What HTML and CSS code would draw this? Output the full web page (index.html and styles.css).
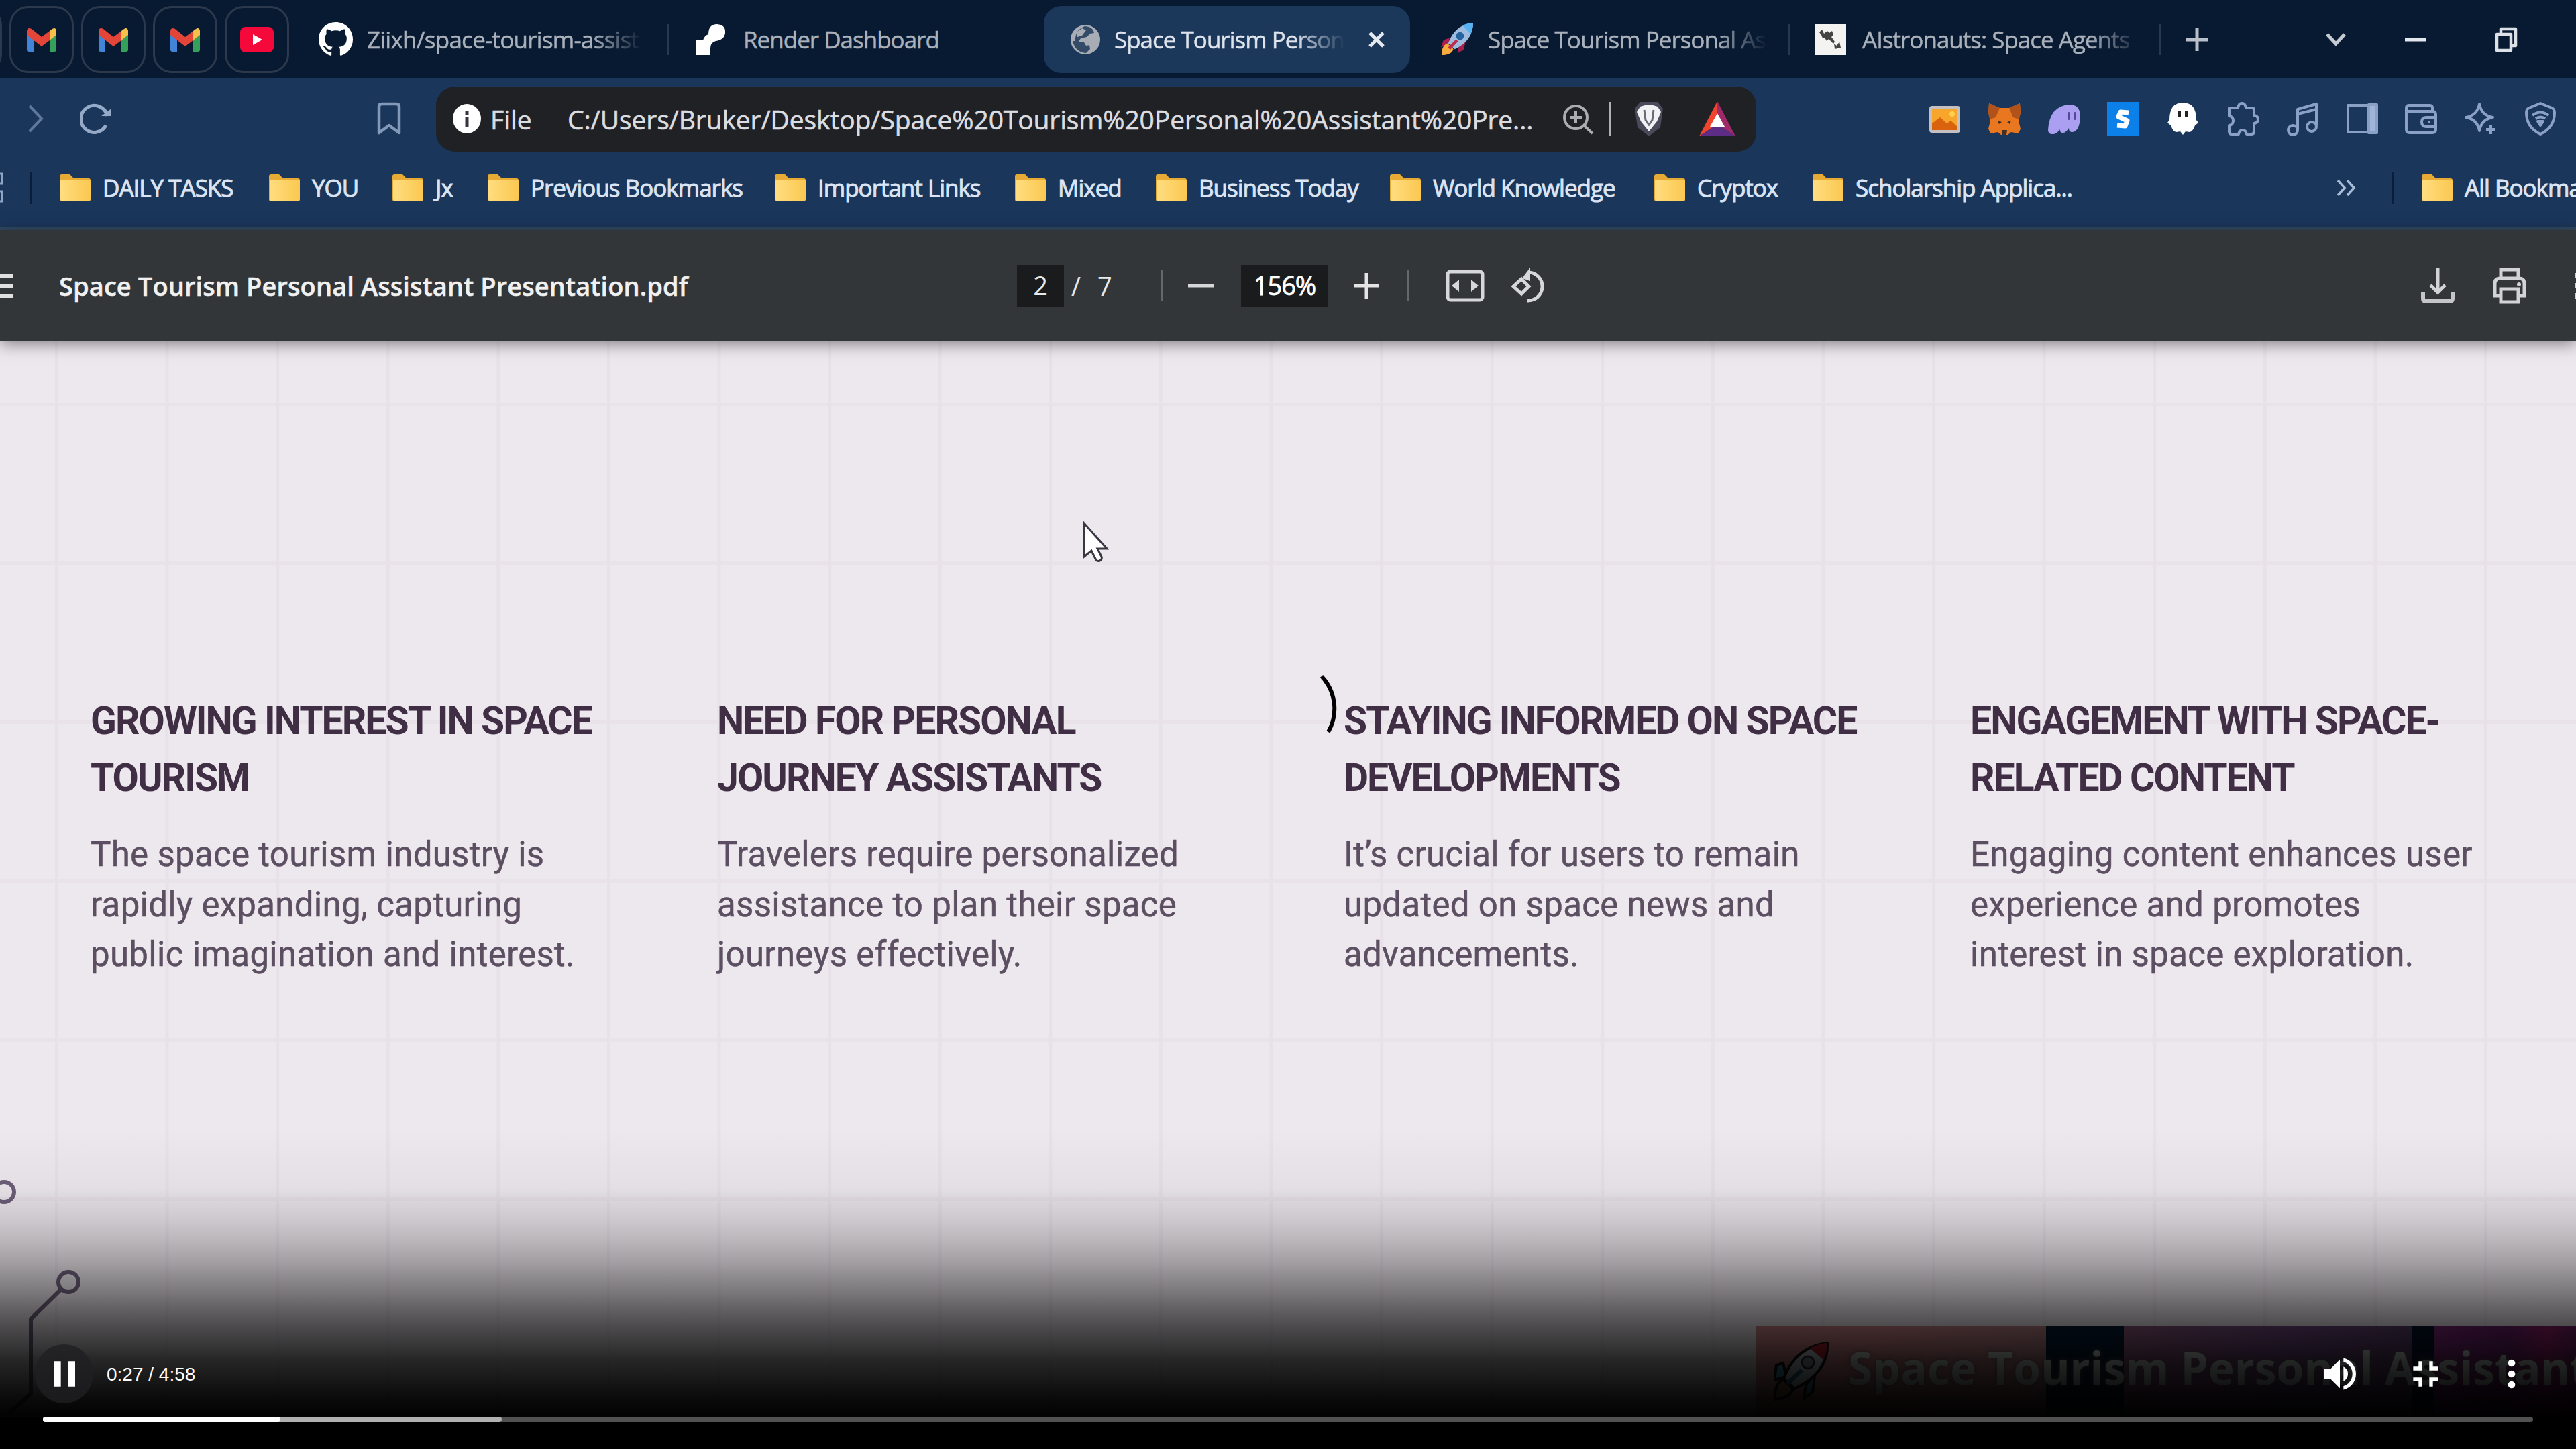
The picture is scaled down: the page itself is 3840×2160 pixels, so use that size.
FILE: index.html
```html
<!DOCTYPE html>
<html lang="en">
<head>
<meta charset="utf-8">
<title>Space Tourism Personal Assistant Presentation</title>
<link rel="stylesheet" href="styles.css">
</head>
<body>
<svg class="defs" aria-hidden="true">
  <defs>
    <linearGradient id="folder-fill" x1="0" x2="1"><stop offset="0" stop-color="#ffdd80"/><stop offset="1" stop-color="#fbc850"/></linearGradient>
    <symbol id="gmail" viewBox="0 0 44 36">
      <path d="M0 7v26q0 3 3 3h7V14z" fill="#4285d8"/><path d="M44 7v26q0 3-3 3h-7V14z" fill="#34a05a"/>
      <path d="M34 5l4-3q5-3 6 3v6l-10 8z" fill="#f7c04a"/><path d="M0 5q1-6 7-3l15 12L34 5v14L22 28 0 11z" fill="#e34538"/>
    </symbol>
    <symbol id="folder" viewBox="0 0 46 40"><path d="M0 3q0-3 3-3h12l6 6h22q3 0 3 3v28q0 3-3 3H3q-3 0-3-3z" fill="#e6aa35"/><path d="M1 10q0-2 2-2h40q3 0 3 3v25q0 3-3 3H3q-2 0-2-3z" fill="url(#folder-fill)"/></symbol>
  </defs>
</svg>

<main class="player">
  <section class="browser">
    <div class="tabstrip">
      <div class="pins">
        <span class="pin"></span>
        <span class="pin"><svg class="gmail"><use href="#gmail"/></svg></span>
        <span class="pin"><svg class="gmail"><use href="#gmail"/></svg></span>
        <span class="pin"><svg class="gmail"><use href="#gmail"/></svg></span>
        <span class="pin"><svg class="youtube" viewBox="0 0 50 38"><rect width="50" height="38" rx="8" fill="#f5093a"/><path d="M19 11l14 8-14 8z" fill="#fff"/></svg></span>
      </div>
      <div class="tab tab-github">
        <svg class="icon51" viewBox="0 0 16 16"><path fill="#fff" d="M8 0C3.58 0 0 3.58 0 8c0 3.54 2.29 6.53 5.47 7.59.4.07.55-.17.55-.38 0-.19-.01-.82-.01-1.49-2.01.37-2.53-.49-2.69-.94-.09-.23-.48-.94-.82-1.13-.28-.15-.68-.52-.01-.53.63-.01 1.08.58 1.23.82.72 1.21 1.87.87 2.33.66.07-.52.28-.87.51-1.07-1.78-.2-3.64-.89-3.64-3.95 0-.87.31-1.59.82-2.15-.08-.2-.36-1.02.08-2.12 0 0 .67-.21 2.2.82.64-.18 1.32-.27 2-.27s1.36.09 2 .27c1.53-1.04 2.2-.82 2.2-.82.44 1.1.16 1.92.08 2.12.51.56.82 1.27.82 2.15 0 3.07-1.87 3.75-3.65 3.95.29.25.54.73.54 1.48 0 1.07-.01 1.93-.01 2.2 0 .21.15.46.55.38A8.01 8.01 0 0 0 16 8c0-4.42-3.58-8-8-8z"/></svg>
        <span class="tab-title fade">Ziixh/space-tourism-assist</span>
      </div>
      <div class="tab tab-render">
        <svg class="icon46" viewBox="0 0 46 46"><path d="M0 46V24h11q2-7 8-9 0-15 13-15 13 1 12 13-1 10-14 12-8 2-8 11v10z" fill="#fff"/></svg>
        <span class="tab-title">Render Dashboard</span>
      </div>
      <div class="tab tab-active">
        <svg class="icon46" viewBox="0 0 46 46"><circle cx="23" cy="23" r="22" fill="#a8adb5"/><path d="M22 3q12 0 14 10l-6 1-5 5-9 2-3 5 8 1 3 5 5-1 1 6-6 6q-16-1-20-18l4 0Q7 9 22 3z" fill="#1e3959" opacity=".85"/><path d="M10 12l8-6 6 3-6 8-7 2zM28 22l12-4 3 6-7 10-9-3z" fill="#a8adb5"/></svg>
        <span class="tab-title fade">Space Tourism Person</span>
        <svg class="close" viewBox="0 0 26 26"><path d="M3 3l20 20M23 3L3 23" stroke="#e6ebf2" stroke-width="5"/></svg>
      </div>
      <div class="tab tab-rocket">
        <svg class="icon51" viewBox="0 0 52 52"><path d="M14 24l-9 3-4 11 12-4zM28 38l-2 9 10-5 2-12z" fill="#a81e4c"/><path d="M2 50q0-15 9-18l9 9q-3 9-18 9z" fill="#f8ab3c"/><path d="M12 32Q22 4 50 1q0 27-28 40z" fill="#9dbce0"/><path d="M34 5Q42 1 50 1q0 9-4 17z" fill="#56b3f2"/><circle cx="30" cy="21" r="6" fill="#27639e"/><path d="M12 38l12-12 3 3-12 13z" fill="#c22a4a"/></svg>
        <span class="tab-title fade">Space Tourism Personal As</span>
      </div>
      <div class="tab tab-ai">
        <svg class="icon46" viewBox="0 0 46 46"><path d="M0 0h46v46H0z" fill="#f3f3f1"/><path d="M6 12l4-4 3 6 5-4 3 3 4-3 2 6-3 3 5 7-2 3-7-7-3 3-3-5-3 1-2-5z" fill="#444"/><path d="M28 29l4 3 4-6 2 9-9 2z" fill="#444"/></svg>
        <span class="tab-title fade">AIstronauts: Space Agents</span>
      </div>
      <svg class="plus" viewBox="0 0 34 34"><path d="M17 0v34M0 17h34" stroke="#b9c0ca" stroke-width="5"/></svg>
      <svg class="win-chevron" viewBox="0 0 30 20"><path d="M2 2l13 14L28 2" fill="none" stroke="#c5cad3" stroke-width="5"/></svg>
      <svg class="win-min" viewBox="0 0 32 6"><path d="M0 3h32" stroke="#e4e8ee" stroke-width="5"/></svg>
      <svg class="win-max" viewBox="0 0 34 38"><path d="M3 11h21v24H3zM9 11V3h22v25h-6" fill="none" stroke="#dde1e7" stroke-width="4.5" stroke-linejoin="round"/></svg>
    </div>

    <div class="toolbar">
      <svg class="fwd" viewBox="0 0 24 42"><path d="M2 2l18 19L2 40" fill="none" stroke="#5d7898" stroke-width="4"/></svg>
      <svg class="reload" viewBox="0 0 48 48"><path d="M39 34A20 20 0 1 1 41 20" fill="none" stroke="#95aac8" stroke-width="5"/><path d="M32 20h15V9z" fill="#95aac8"/></svg>
      <svg class="mark" viewBox="0 0 36 50"><path d="M3 46V7q0-4 4-4h22q4 0 4 4v39L18 35z" fill="none" stroke="#8299ba" stroke-width="4.5" stroke-linejoin="round"/></svg>
      <div class="address">
        <svg class="info" viewBox="0 0 42 44"><ellipse cx="21" cy="22" rx="21" ry="22" fill="#fff"/><path d="M18.500 10h5v6h-5zM18.500 19h5v15h-5z" fill="#33363b"/></svg>
        <span class="scheme">File</span>
        <span class="url">C:/Users/Bruker/Desktop/Space%20Tourism%20Personal%20Assistant%20Pre...</span>
        <svg class="magnify" viewBox="0 0 47 47"><circle cx="20" cy="21" r="17" fill="none" stroke="#a9acb0" stroke-width="4"/><path d="M32 33l13 12M20 12v18M11 21h18" stroke="#a9acb0" stroke-width="4"/></svg>
        <span class="address-rule"></span>
        <svg class="lion" viewBox="0 0 46 54"><path d="M10 2h26l8 10-4 28-17 13L6 40 2 12z" fill="#4b4a5b"/><path d="M10 9l7-2h12l7 2 5 8-6 14-12 15-12-15-6-14z" fill="#f2f2f5"/><path d="M16 14l2 15 5 7 5-7 2-15" fill="none" stroke="#6b6b78" stroke-width="3"/></svg>
        <svg class="bat" viewBox="0 0 54 52"><path d="M27 0L0 52l27-17z" fill="#f0452c"/><path d="M27 0l27 52-27-17z" fill="#9e2a68"/><path d="M0 52h54L27 34z" fill="#5d2c84"/><path d="M27 18L16 38h22z" fill="#fff"/></svg>
      </div>
      <div class="extensions">
        <svg viewBox="0 0 48 50"><rect x="1" y="6" width="46" height="40" rx="4" fill="#c4bfc0"/><path d="M5 10h38v32H5z" fill="#f8a52c"/><path d="M5 42V32l12-9 10 9 6-4 10 9v5z" fill="#d9620f"/><circle cx="35" cy="18" r="4" fill="#ffcf4f"/></svg>
        <svg viewBox="0 0 48 50"><path d="M1 2l16 7h14l16-7 1 14-3 12 3 12-3 7-11-2-5 4H19l-5-4-11 2-3-7 3-12-3-12z" fill="#e8771f"/><path d="M1 2l16 7-6 14-9 3-2-10zM47 2L31 9l6 14 9 3 2-10z" fill="#b0521a"/><path d="M14 28l6 2-4 3zM34 28l-6 2 4 3zM20 42h8l-1 7h-6z" fill="#40302b"/></svg>
        <svg viewBox="0 0 48 50"><path d="M0 42Q2 6 32 4q16 0 16 18-1 22-12 23-5 0-5-6-5 8-10 7-4-1-3-5-6 8-13 7-5-1-5-6z" fill="#ab9ff2"/><path d="M31 17v8M40 17v8" stroke="#55479c" stroke-width="4" stroke-linecap="round"/></svg>
        <svg viewBox="0 0 48 50"><path d="M0 0h48v50H0z" fill="#0a80e8"/><path d="M32 16l-12-1-3 7 13 6-3 8-12-1" fill="none" stroke="#fff" stroke-width="7" stroke-linejoin="round"/></svg>
        <svg viewBox="0 0 48 50"><path d="M4 27Q4 1 24 1t20 26l3 4-5 4q-3 9-8 10l-6-1-4 5-4-5-6 1q-5-1-8-10l-5-4z" fill="#fff"/><path d="M19 13v10M29 13v10" stroke="#222" stroke-width="4"/></svg>
        <svg viewBox="0 0 48 50" class="line"><path d="M4 9h13q1-7 6-7t6 7h9q3 0 3 3v8q6 1 6 6t-6 6v12q0 4-4 4h-7q-1-6-6-6t-6 6H8q-4 0-4-4v-9q6-1 6-7t-6-7z"/></svg>
        <svg viewBox="0 0 48 50" class="line"><path d="M17 41V11L45 3v32M17 18l28-7"/><circle cx="10" cy="42" r="7"/><circle cx="38" cy="37" r="7"/></svg>
        <svg viewBox="0 0 48 50" class="line"><path d="M3 5h42v40H3z"/><path d="M34 4h12v42H34z" fill="#9fb4d8"/></svg>
        <svg viewBox="0 0 48 50" class="line"><path d="M41 15V9q0-4-4-4H6Q2 5 2 9v32q0 5 5 5h34q5 0 5-5V19q0-5-5-5H4M46 23H32q-7 0-7 7t7 7h14M35 30h3"/></svg>
        <svg viewBox="0 0 48 50" class="line"><path d="M22 3q3 17 20 20-17 3-20 20Q19 26 2 23 19 20 22 3zM39 34v14M32 41h14"/></svg>
        <svg viewBox="0 0 48 50" class="line"><path d="M24 2l17 7q4 2 4 7 0 22-21 32Q3 38 3 16q0-5 4-7zM12 20q12-9 24 0M17 25q7-5 14 0"/><path d="M20 29h8l-4 6z"/></svg>
      </div>
    </div>

    <div class="bookmarks">
      <svg class="apps" viewBox="0 0 4 46"><path d="M0 2h3v15H0M0 28h3v15H0" fill="none" stroke="#8fa5c4" stroke-width="3"/></svg>
      <span class="bookmark-rule"></span>
      <span class="bookmark"><svg><use href="#folder"/></svg>DAILY TASKS</span>
      <span class="bookmark"><svg><use href="#folder"/></svg>YOU</span>
      <span class="bookmark"><svg><use href="#folder"/></svg>Jx</span>
      <span class="bookmark"><svg><use href="#folder"/></svg>Previous Bookmarks</span>
      <span class="bookmark"><svg><use href="#folder"/></svg>Important Links</span>
      <span class="bookmark"><svg><use href="#folder"/></svg>Mixed</span>
      <span class="bookmark"><svg><use href="#folder"/></svg>Business Today</span>
      <span class="bookmark"><svg><use href="#folder"/></svg>World Knowledge</span>
      <span class="bookmark"><svg><use href="#folder"/></svg>Cryptox</span>
      <span class="bookmark"><svg><use href="#folder"/></svg>Scholarship Applica...</span>
      <svg class="more-marks" viewBox="0 0 30 24"><path d="M2 1l10 11L2 23M16 1l10 11-10 11" fill="none" stroke="#a9bcd8" stroke-width="3.500"/></svg>
      <span class="bookmark-rule"></span>
      <span class="bookmark"><svg><use href="#folder"/></svg>All Bookmarks</span>
    </div>
  </section>

  <section class="pdfbar">
    <svg class="menu" viewBox="0 0 20 38"><path d="M0 4h19M0 19h19M0 34h19" stroke="#e0e0e0" stroke-width="6"/></svg>
    <span class="filename">Space Tourism Personal Assistant Presentation.pdf</span>
    <span class="page-box">2</span>
    <span class="pages">/<span>7</span></span>
    <span class="pdf-rule"></span>
    <svg class="zoom-btn" viewBox="0 0 38 38"><path d="M0 19h38" stroke="#d6d7d8" stroke-width="5"/></svg>
    <span class="zoom-box">156%</span>
    <svg class="zoom-btn" viewBox="0 0 38 38"><path d="M0 19h38M19 0v38" stroke="#e4e4e4" stroke-width="5"/></svg>
    <span class="pdf-rule"></span>
    <svg class="fit" viewBox="0 0 58 48"><rect x="3" y="3" width="52" height="42" rx="4" fill="none" stroke="#d6d7d8" stroke-width="5"/><path d="M20 15v18L9 24zM38 15v18l11-9z" fill="#d6d7d8"/></svg>
    <svg class="rotate" viewBox="0 0 54 54"><path d="M27 7a21 21 0 1 1-2 42" fill="none" stroke="#d6d7d8" stroke-width="5"/><path d="M17 16L29 0v20z" fill="#d6d7d8"/><path d="M16 17l11 11-11 11L4 28z" fill="none" stroke="#d6d7d8" stroke-width="5"/></svg>
    <svg class="download" viewBox="0 0 50 54"><path d="M25 1v36M14 26l11 11 11-11" fill="none" stroke="#d2d3d4" stroke-width="5"/><path d="M3 36v10q0 4 4 4h36q4 0 4-4V36" fill="none" stroke="#c4c5c6" stroke-width="6"/></svg>
    <svg class="print" viewBox="0 0 50 54"><path d="M12 15V3h26v12M11 42H3V24q0-8 8-8h28q8 0 8 8v18h-8" fill="none" stroke="#d2d3d4" stroke-width="5"/><path d="M12 32h26v19H12z" fill="none" stroke="#d2d3d4" stroke-width="5"/><circle cx="39" cy="25" r="3" fill="#d2d3d4"/></svg>
    <svg class="more-pdf" viewBox="0 0 4 38"><path d="M2 0h2v8H2zM2 15h2v8H2zM2 30h2v8H2z" fill="#d2d3d4"/></svg>
  </section>

  <section class="slide">
    <article><h2>GROWING INTEREST IN SPACE<br>TOURISM</h2><p>The space tourism industry is<br>rapidly expanding, capturing<br>public imagination and interest.</p></article>
    <article><h2>NEED FOR PERSONAL<br>JOURNEY ASSISTANTS</h2><p>Travelers require personalized<br>assistance to plan their space<br>journeys effectively.</p></article>
    <article><h2>STAYING INFORMED ON SPACE<br>DEVELOPMENTS</h2><p>It’s crucial for users to remain<br>updated on space news and<br>advancements.</p></article>
    <article><h2>ENGAGEMENT WITH SPACE-<br>RELATED CONTENT</h2><p>Engaging content enhances user<br>experience and promotes<br>interest in space exploration.</p></article>
    <svg class="circuit" viewBox="0 0 130 360"><g fill="none" stroke="#6c5f7a" stroke-width="6"><circle cx="6" cy="27" r="15"/><circle cx="102" cy="161" r="15"/><path d="M91 172l-45 44v111L2 368"/></g></svg>
    <div class="banner">
      <svg class="banner-rocket" viewBox="0 0 84 88"><path d="M14 32l-10 3-3 22 18-5zM48 64l-3 21 13-10 3-25z" fill="#3fa9c8" stroke="#111" stroke-width="4"/><path d="M2 86q-1-24 12-30l15 14q-4 14-27 16z" fill="#a87650" stroke="#111" stroke-width="4"/><path d="M15 55Q32 8 80 2q2 44-49 68z" fill="#cdd8de" stroke="#111" stroke-width="4"/><path d="M54 10Q68 2 80 2q0 14-6 25z" fill="#b51f2e"/><circle cx="51" cy="31" r="9" fill="#8fa0ac" stroke="#333" stroke-width="3"/><path d="M20 63l22-21" stroke="#31708c" stroke-width="6"/></svg>
      <span>Space Tourism Personal Assistant</span>
    </div>
  </section>

  <svg class="cursor" viewBox="0 0 40 62"><path d="M3 3v50l11-9 7 14q3 3 7 0 2-2 1-5l-6-12h14z" fill="#fff" stroke="#3a3742" stroke-width="3"/></svg>
  <svg class="spinner" viewBox="0 0 30 90"><path d="M3 3A70 70 0 0 1 13 86" fill="none" stroke="#000" stroke-width="6"/></svg>

  <div class="controls">
    <div class="buttons">
      <span class="pause"><svg viewBox="0 0 24 24"><path d="M6 19h4V5H6zm8-14v14h4V5z" fill="#fff"/></svg></span>
      <span class="time">0:27 / 4:58</span>
      <svg class="ctl" viewBox="0 0 24 24"><path fill="#fff" d="M3 9v6h4l5 5V4L7 9zm13.500 3A4.500 4.500 0 0 0 14 7.970v8.050A4.500 4.500 0 0 0 16.500 12zM14 3.230v2.060a7 7 0 0 1 0 13.420v2.060a9 9 0 0 0 0-17.540z"/></svg>
      <svg class="ctl" viewBox="0 0 24 24"><path fill="#fff" d="M5 16h3v3h2v-5H5zm3-8H5v2h5V5H8zm6 11h2v-3h3v-2h-5zm2-11V5h-2v5h5V8z"/></svg>
      <svg class="ctl" viewBox="0 0 24 24"><path fill="#fff" d="M12 8a2 2 0 1 0 0-4 2 2 0 0 0 0 4zm0 2a2 2 0 1 0 0 4 2 2 0 0 0 0-4zm0 6a2 2 0 1 0 0 4 2 2 0 0 0 0-4z"/></svg>
    </div>
    <div class="track"><div class="buffered"><div class="played"></div></div></div>
  </div>
</main>
</body>
</html>
```
FILE: styles.css
```css
* { box-sizing: border-box; }
body { margin: 0; background: #000; overflow: hidden; font-family: "Open Sans", "Noto Sans", sans-serif; }
svg { display: block; flex: none; }
.defs { position: absolute; width: 0; height: 0; }
.player { position: relative; width: 3840px; height: 2160px; overflow: hidden; display: flex; flex-direction: column; background: #000; }

/* browser chrome */
.browser { flex: none; height: 343px; background: #1a365a; border-bottom: 4px solid #2f485f; overflow: hidden; }
.tabstrip { height: 117px; background: #081a32; display: flex; align-items: center; white-space: nowrap; }
.pins { width: 475px; display: flex; gap: 11px; margin-left: -93px; }
.pin { width: 96px; height: 100px; border: 3px solid #2c394d; border-radius: 28px; display: grid; place-items: center; flex: none; }
.gmail { width: 44px; height: 36px; }
.youtube { width: 50px; height: 38px; }
.icon51 { width: 51px; height: 51px; }
.icon46 { width: 46px; height: 46px; }
.tab { height: 100px; display: flex; align-items: center; flex: none; font-size: 35px; letter-spacing: -1px; color: #aab1bb; -webkit-text-stroke: .5px; }
.tab-title { overflow: hidden; padding-bottom: 1px; }
.fade { -webkit-mask-image: linear-gradient(to right, #000 calc(100% - 75px), transparent); mask-image: linear-gradient(to right, #000 calc(100% - 75px), transparent); }
.tab-github { width: 522px; margin-left: 93px; gap: 21px; letter-spacing: -.75px; }
.tab-github .tab-title { width: 411px; }
.tab-github::after, .tab-rocket::after, .tab-ai::after { content: ""; width: 3px; height: 46px; background: #243952; margin-left: auto; }
.tab-render { width: 559px; padding-left: 40px; gap: 25px; }
.tab-active { width: 546px; padding-left: 39px; background: #1b375a; border-radius: 26px; gap: 20px; color: #dfe4ec; }
.tab-active .tab-title { width: 344px; }
.close { width: 26px; height: 26px; margin-left: 14px; }
.tab-rocket { width: 566px; padding-left: 45px; gap: 20px; }
.tab-rocket .tab-title { width: 416px; }
.tab-ai { width: 553px; padding-left: 38px; gap: 24px; }
.tab-ai .tab-title { width: 414px; }
.plus { width: 34px; height: 34px; margin-left: 37px; }
.win-chevron { width: 30px; height: 20px; margin-left: 175px; }
.win-min { width: 32px; height: 6px; margin-left: 88px; }
.win-max { width: 34px; height: 38px; margin-left: 102px; }

.toolbar { height: 120px; display: flex; align-items: center; }
.fwd { width: 24px; height: 42px; margin-left: 42px; }
.reload { width: 48px; height: 48px; margin-left: 53px; }
.mark { width: 36px; height: 50px; margin-left: 395px; }
.address { width: 1968px; height: 97px; margin-left: 52px; border-radius: 28px; background: #202124; display: flex; align-items: center; font-size: 39px; color: #dcdde0; white-space: nowrap; -webkit-text-stroke: .6px; }
.info { width: 42px; height: 44px; margin-left: 25px; }
.scheme { width: 115px; margin-left: 14px; }
.url { width: 1483px; letter-spacing: -0.120px; }
.magnify { width: 47px; height: 47px; }
.address-rule { width: 3px; height: 50px; margin-left: 22px; background: #aeb0b4; }
.lion { width: 46px; height: 54px; margin-left: 34px; }
.bat { width: 54px; height: 52px; margin-left: 52px; }
.extensions { display: flex; gap: 40.800px; margin-left: 257px; }
.extensions svg { width: 48px; height: 50px; }
.line { fill: none; stroke: #8aa1c5; stroke-width: 4; stroke-linejoin: round; }

.bookmarks { height: 85px; display: grid; align-items: center; white-space: nowrap; font-size: 35px; letter-spacing: -1px; color: #dae4f3; -webkit-text-stroke: 1px;
  grid-template-columns: 44px 45px 312px 184px 142px 428px 358px 210px 349px 394px 236px 781px 82px 45px 230px; }
.bookmark { display: flex; align-items: center; gap: 18px; }
.bookmark svg { width: 46px; height: 40px; }
.bookmark-rule { width: 4px; height: 48px; background: #0a1d3a; }
.apps { width: 4px; height: 46px; }
.more-marks { width: 30px; height: 24px; }

/* document viewer toolbar */
.pdfbar { position: relative; z-index: 1; flex: none; height: 165px; background: #323639; box-shadow: 0 4px 22px rgba(30, 25, 35, .55); display: flex; align-items: center; font-size: 38px; color: #e8e8e8; white-space: nowrap; }
.menu { width: 20px; height: 38px; }
.filename { width: 1428px; margin-left: 68px; padding-top: 1px; font-weight: 600; letter-spacing: .1px; color: #f1f1f1; -webkit-text-stroke: .5px; }
.page-box { width: 70px; height: 62px; line-height: 60px; background: #191b1c; text-align: center; }
.pages { width: 144px; padding-left: 11px; }
.pages span { margin-left: 25px; }
.pdf-rule { width: 3px; height: 46px; background: #64686b; }
.zoom-btn { width: 38px; height: 38px; margin: 0 41px 0 38px; }
.zoom-box { width: 130px; height: 62px; line-height: 60px; background: #191b1c; text-align: center; letter-spacing: -1px; color: #fff; -webkit-text-stroke: .8px; }
.fit { width: 58px; height: 48px; margin-left: 55px; }
.rotate { width: 54px; height: 54px; margin-left: 39px; }
.download { width: 50px; height: 54px; margin-left: 1303px; }
.print { width: 50px; height: 54px; margin-left: 57px; }
.more-pdf { width: 4px; height: 38px; margin-left: auto; }

/* slide */
.slide { position: relative; flex: none; height: 1604px; padding: 524px 0 0 135px; display: grid; grid-template-columns: repeat(4, 934px); align-items: start; overflow: hidden; font-family: Roboto, sans-serif;
  background:
    linear-gradient(to right, #e8e1e9 5px, transparent 5px) 82px 0 / 164.600px 100%,
    linear-gradient(to bottom, #e9e2e9 5px, transparent 5px) 0 92px / 100% 237px,
    #ede8ed; }
.slide h2 { margin: 0; font-size: 57px; line-height: 85px; font-weight: 700; letter-spacing: -1.93px; color: #402e45; white-space: nowrap; }
.slide p { margin: 35px 0 0; font-size: 51px; line-height: 74.500px; letter-spacing: .3px; color: #5c4f62; white-space: nowrap; -webkit-text-stroke: .5px; }
.circuit { position: absolute; left: 0; top: 1242px; width: 130px; height: 360px; }
.banner { position: absolute; left: 2617px; top: 1468px; width: 1223px; height: 136px; padding: 0 0 0 27px; display: flex; align-items: center; gap: 27px; white-space: nowrap; overflow: hidden; font: 700 66px "Open Sans", sans-serif; color: #dbe3e2;
  background: linear-gradient(to right, #d08588 0 200px, #b88288 433px, #021a33 433px 549px, #905a80 549px, #704a84 800px, #5e416d 978px, #02142b 978px 1011px, #842a80 1011px, #6b2070 1120px, #97206c 1180px, #6d2067); }
.banner-rocket { width: 84px; height: 88px; }
.banner span { padding-bottom: 12px; text-shadow: 0 0 8px #6b555a; }

.cursor { position: absolute; z-index: 2; left: 1613px; top: 777px; width: 40px; height: 62px; }
.spinner { position: absolute; z-index: 2; left: 1967px; top: 1005px; width: 30px; height: 90px; }

/* video controls */
.controls { position: absolute; z-index: 3; inset: auto 0 0; height: 480px; padding: 0 64px 40px 52px; display: flex; flex-direction: column; justify-content: flex-end;
  background: linear-gradient(to bottom, transparent 0, rgba(0,0,0,.04) 90px, rgba(0,0,0,.1) 120px, rgba(0,0,0,.14) 140px, rgba(0,0,0,.22) 170px, rgba(0,0,0,.31) 200px, rgba(0,0,0,.39) 220px, rgba(0,0,0,.48) 245px, rgba(0,0,0,.58) 270px, rgba(0,0,0,.67) 295px, rgba(0,0,0,.75) 320px, rgba(0,0,0,.845) 350px, rgba(0,0,0,.905) 380px, rgba(0,0,0,.955) 405px, rgba(0,0,0,.99) 430px, #000 460px); }
.buttons { display: flex; align-items: center; height: 88px; margin-bottom: 20px; }
.pause { width: 87px; height: 88px; border-radius: 50%; background: rgba(31, 31, 34, .8); display: grid; place-items: center; }
.pause svg, .ctl { width: 64px; height: 64px; }
.time { margin: 0 auto 0 20px; padding-top: 2px; font: 28px "Liberation Sans", sans-serif; color: #fff; }
.ctl + .ctl { margin-left: 64px; }
.track { margin-left: 12px; height: 8px; border-radius: 4px; background: #515151; }
.buffered { width: 684px; height: 8px; border-radius: 4px; background: #b0b0b0; }
.played { width: 354px; height: 8px; border-radius: 4px; background: #fff; }
```
